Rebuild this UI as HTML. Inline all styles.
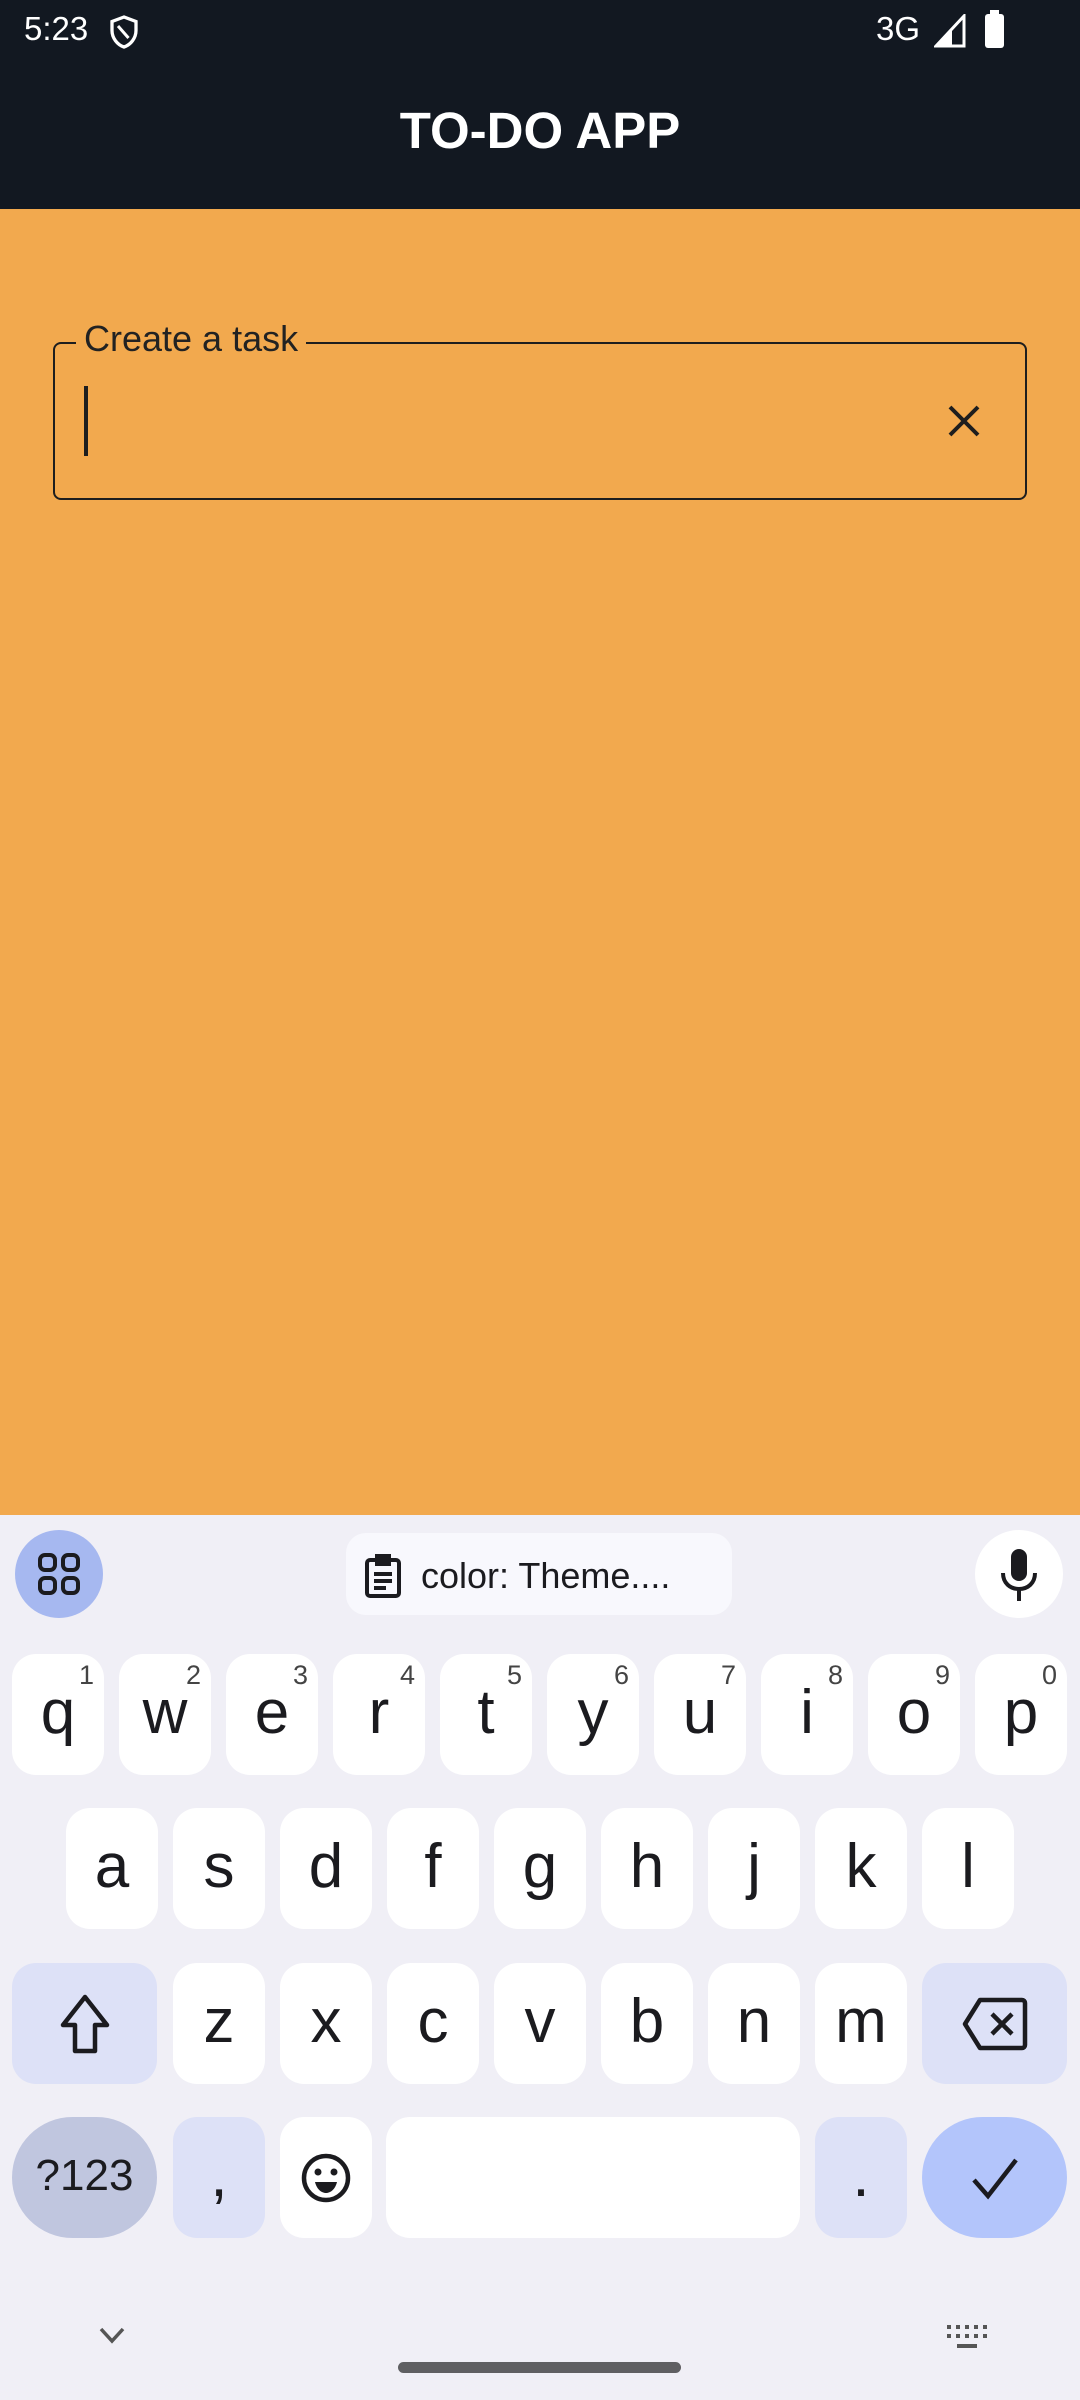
<!DOCTYPE html>
<html><head><meta charset="utf-8"><style>
*{margin:0;padding:0;box-sizing:border-box}
body{width:1080px;height:2400px;position:relative;overflow:hidden;font-family:"Liberation Sans",sans-serif;background:#F0EFF6}
.a{position:absolute}
.k{position:absolute;background:#fff;border-radius:24px;height:121px;width:92px;display:flex;align-items:center;justify-content:center;font-size:62px;color:#1b1b1f}
.k sup{position:absolute;top:6px;right:10px;font-size:27px;color:#444}
.k span{margin-top:-4px}
</style></head><body>
<div class="a" style="left:0;top:0;width:1080px;height:209px;background:#121821"></div>
<div class="a" style="left:24px;top:10px;color:#fff;font-size:33px">5:23</div>
<svg class="a" style="left:106px;top:14px" width="36" height="36" viewBox="0 0 24 24"><path d="M12 2L4 5v6c0 5 3.5 9.5 8 11 4.5-1.5 8-6 8-11V5z" fill="none" stroke="#fff" stroke-width="2.2"/><path d="M8 8l7 8" stroke="#fff" stroke-width="2"/></svg>
<div class="a" style="left:876px;top:10px;color:#fff;font-size:33px">3G</div>
<svg class="a" style="left:934px;top:14px" width="32" height="34" viewBox="0 0 32 34"><path d="M2 32L30 2v30z" fill="none" stroke="#fff" stroke-width="3"/><path d="M2 32L18 15v17z" fill="#fff"/></svg>
<div class="a" style="left:985px;top:14px;width:19px;height:34px;background:#fff;border-radius:3px"></div>
<div class="a" style="left:990px;top:10px;width:9px;height:5px;background:#fff"></div>
<div class="a" style="left:0;top:101px;width:1080px;text-align:center;color:#fff;font-size:51px;font-weight:bold">TO-DO APP</div>
<div class="a" style="left:0;top:209px;width:1080px;height:1306px;background:#F2A94E"></div>
<div class="a" style="left:53px;top:342px;width:974px;height:158px;border:2.5px solid #1e1e1e;border-radius:8px"></div>
<div class="a" style="left:76px;top:318px;padding:0 8px;background:#F2A94E;font-size:36px;color:#222">Create a task</div>
<div class="a" style="left:84px;top:386px;width:4px;height:70px;background:#1e1e1e"></div>
<svg class="a" style="left:946px;top:403px" width="36" height="36" viewBox="0 0 36 36"><path d="M4 4L32 32M32 4L4 32" stroke="#1e1e1e" stroke-width="4"/></svg>

<div class="a" style="left:15px;top:1530px;width:88px;height:88px;border-radius:50%;background:#A6B8F0"></div>
<svg class="a" style="left:37px;top:1552px" width="44" height="44" viewBox="0 0 44 44" fill="none" stroke="#1b1b1f" stroke-width="4"><rect x="3" y="3" width="15" height="15" rx="5"/><rect x="26" y="3" width="15" height="15" rx="5"/><rect x="3" y="26" width="15" height="15" rx="5"/><rect x="26" y="26" width="15" height="15" rx="5"/></svg>
<div class="a" style="left:346px;top:1533px;width:386px;height:82px;border-radius:20px;background:#F8F8FD"></div>
<svg class="a" style="left:365px;top:1554px" width="36" height="44" viewBox="0 0 36 44" fill="none" stroke="#1b1b1f" stroke-width="4"><rect x="2" y="6" width="32" height="36" rx="3"/><rect x="12" y="2" width="12" height="8" fill="#1b1b1f"/><path d="M9 20h18M9 27h18M9 34h12"/></svg>
<div class="a" style="left:421px;top:1555px;font-size:36px;color:#1b1b1f">color: Theme....</div>
<div class="a" style="left:975px;top:1530px;width:88px;height:88px;border-radius:50%;background:#fff"></div>
<svg class="a" style="left:999px;top:1547px" width="40" height="56" viewBox="0 0 40 56"><rect x="12" y="2" width="16" height="32" rx="8" fill="#1b1b1f"/><path d="M4 26c0 10 7 16 16 16s16-6 16-16M20 42v12" fill="none" stroke="#1b1b1f" stroke-width="4"/></svg>

<div class="k" style="left:12px;top:1654px"><span>q</span><sup>1</sup></div>
<div class="k" style="left:119px;top:1654px"><span>w</span><sup>2</sup></div>
<div class="k" style="left:226px;top:1654px"><span>e</span><sup>3</sup></div>
<div class="k" style="left:333px;top:1654px"><span>r</span><sup>4</sup></div>
<div class="k" style="left:440px;top:1654px"><span>t</span><sup>5</sup></div>
<div class="k" style="left:547px;top:1654px"><span>y</span><sup>6</sup></div>
<div class="k" style="left:654px;top:1654px"><span>u</span><sup>7</sup></div>
<div class="k" style="left:761px;top:1654px"><span>i</span><sup>8</sup></div>
<div class="k" style="left:868px;top:1654px"><span>o</span><sup>9</sup></div>
<div class="k" style="left:975px;top:1654px"><span>p</span><sup>0</sup></div>

<div class="k" style="left:66px;top:1808px"><span>a</span></div>
<div class="k" style="left:173px;top:1808px"><span>s</span></div>
<div class="k" style="left:280px;top:1808px"><span>d</span></div>
<div class="k" style="left:387px;top:1808px"><span>f</span></div>
<div class="k" style="left:494px;top:1808px"><span>g</span></div>
<div class="k" style="left:601px;top:1808px"><span>h</span></div>
<div class="k" style="left:708px;top:1808px"><span>j</span></div>
<div class="k" style="left:815px;top:1808px"><span>k</span></div>
<div class="k" style="left:922px;top:1808px"><span>l</span></div>

<div class="k" style="left:12px;top:1963px;width:145px;background:#DDE1F7"><svg width="52" height="62" viewBox="0 0 52 62"><path d="M26 4L4 32h12v26h20V32h12z" fill="none" stroke="#1b1b1f" stroke-width="4.5" stroke-linejoin="round"/></svg></div>
<div class="k" style="left:173px;top:1963px"><span>z</span></div>
<div class="k" style="left:280px;top:1963px"><span>x</span></div>
<div class="k" style="left:387px;top:1963px"><span>c</span></div>
<div class="k" style="left:494px;top:1963px"><span>v</span></div>
<div class="k" style="left:601px;top:1963px"><span>b</span></div>
<div class="k" style="left:708px;top:1963px"><span>n</span></div>
<div class="k" style="left:815px;top:1963px"><span>m</span></div>
<div class="k" style="left:922px;top:1963px;width:145px;background:#DDE1F7"><svg width="66" height="54" viewBox="0 0 66 54"><path d="M18 3h42a3 3 0 0 1 3 3v42a3 3 0 0 1-3 3H18L3 27z" fill="none" stroke="#1b1b1f" stroke-width="4.5" stroke-linejoin="round"/><path d="M30 17l20 20M50 17L30 37" stroke="#1b1b1f" stroke-width="4.5"/></svg></div>

<div class="k" style="left:12px;top:2117px;width:145px;border-radius:61px;background:#C0C6DF;font-size:44px"><span>?123</span></div>
<div class="k" style="left:173px;top:2117px;background:#DDE1F7"><span>,</span></div>
<div class="k" style="left:280px;top:2117px"><svg width="52" height="52" viewBox="0 0 52 52"><circle cx="26" cy="26" r="22" fill="none" stroke="#1b1b1f" stroke-width="4.5"/><circle cx="18" cy="20" r="3.5" fill="#1b1b1f"/><circle cx="34" cy="20" r="3.5" fill="#1b1b1f"/><path d="M15 30h22c-2 8-7 11-11 11s-9-3-11-11z" fill="#1b1b1f"/></svg></div>
<div class="k" style="left:386px;top:2117px;width:414px"></div>
<div class="k" style="left:815px;top:2117px;background:#DDE1F7"><span>.</span></div>
<div class="k" style="left:922px;top:2117px;width:145px;border-radius:61px;background:#B3C5FB"><svg width="50" height="44" viewBox="0 0 50 44"><path d="M4 24l14 16L46 4" fill="none" stroke="#1b1b1f" stroke-width="4.5"/></svg></div>

<svg class="a" style="left:98px;top:2326px" width="28" height="20" viewBox="0 0 28 20"><path d="M3 3l11 12L25 3" fill="none" stroke="#555" stroke-width="3.5"/></svg>
<svg class="a" style="left:947px;top:2325px" width="42" height="28" viewBox="0 0 42 28" fill="#555"><rect x="0" y="0" width="4" height="4"/><rect x="9" y="0" width="4" height="4"/><rect x="18" y="0" width="4" height="4"/><rect x="27" y="0" width="4" height="4"/><rect x="36" y="0" width="4" height="4"/><rect x="0" y="9" width="4" height="4"/><rect x="9" y="9" width="4" height="4"/><rect x="18" y="9" width="4" height="4"/><rect x="27" y="9" width="4" height="4"/><rect x="36" y="9" width="4" height="4"/><rect x="10" y="19" width="20" height="4"/></svg>
<div class="a" style="left:398px;top:2362px;width:283px;height:11px;border-radius:6px;background:#5f5f62"></div>
</body></html>
